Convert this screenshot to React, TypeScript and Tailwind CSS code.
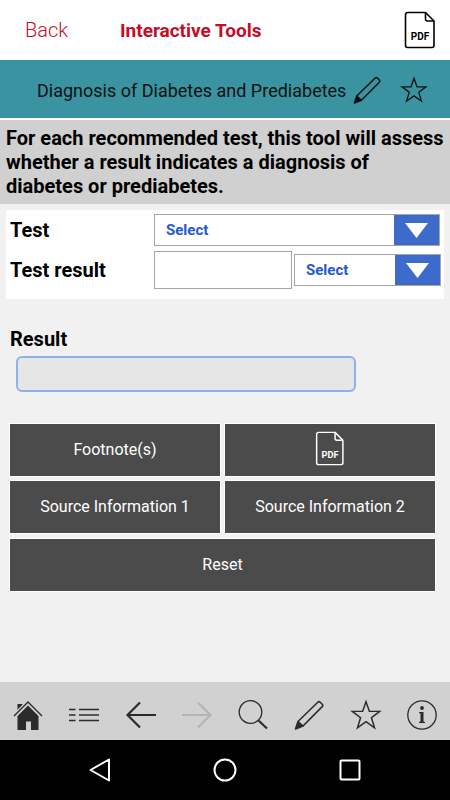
import type { ReactNode } from 'react';

function PdfIcon({ className }: { className: string }) {
  return (
    <svg className={className} viewBox="0 0 32 38" fill="none" stroke="currentColor" strokeWidth="1.6" aria-hidden="true">
      <path d="M3.500 1.500h18l8.500 8.500v24.500a2 2 0 0 1-2 2H3.500a2 2 0 0 1-2-2V3.500a2 2 0 0 1 2-2z" strokeLinejoin="round" />
      <path d="M21.500 1.500V8a2 2 0 0 0 2 2H30" />
      <text x="16" y="29" textAnchor="middle" fontFamily="'Liberation Sans Narrow', Roboto, sans-serif" fontSize="10" fontWeight="700" fill="currentColor" stroke="none">
        PDF
      </text>
    </svg>
  );
}

function PencilIcon({ className }: { className: string }) {
  return (
    <svg className={className} viewBox="0 0 30 30" fill="none" stroke="currentColor" strokeWidth="1.6" strokeLinejoin="round" aria-hidden="true">
      <path d="M4 21.500 23.800 2.200q1.200-1.200 2.400 0l2 2q1.200 1.200 0 2.400L9 26" />
      <path d="M4 21.500 1.500 29 9 26z" fill="currentColor" />
    </svg>
  );
}

function StarIcon({ className }: { className: string }) {
  return (
    <svg className={className} viewBox="0 0 30 30" fill="none" stroke="currentColor" strokeWidth="1.4" aria-hidden="true">
      <path d="M15 2.500l3.200 9.100h9.600l-7.700 5.900 2.900 9.500-8-5.700-8 5.700 2.900-9.500-7.700-5.900h9.600z" />
    </svg>
  );
}

function HomeIcon() {
  return (
    <svg className="size-[30px]" viewBox="0 0 30 30" aria-hidden="true">
      <path d="M4.500 4h5v3L4.500 12z" fill="currentColor" />
      <path d="M1 16 15 2l14 14" fill="none" stroke="#d1d1d1" strokeWidth="4" />
      <path d="M1 16 15 2l14 14" fill="none" stroke="currentColor" strokeWidth="1.400" />
      <path d="M15 5.500 25.500 16v14H18v-8.500h-5V30H4.500V16z" fill="currentColor" />
    </svg>
  );
}

function ListIcon() {
  return (
    <svg className="size-[30px]" viewBox="0 0 30 30" stroke="currentColor" strokeWidth="1.700" aria-hidden="true">
      <path d="M0 9.500h6.500M10 9.500h20M0 15h6.500M10 15h20M0 20.500h6.500M10 20.500h20" />
    </svg>
  );
}

function ArrowIcon({ flipped = false }: { flipped?: boolean }) {
  return (
    <svg className="size-[30px]" viewBox="0 0 30 30" fill="none" stroke="currentColor" strokeWidth="2.200" aria-hidden="true">
      {flipped ? <path d="M0 15h28M16 2.500 28.500 15 16 27.500" /> : <path d="M30 15H2M14 2.500 1.500 15 14 27.500" />}
    </svg>
  );
}

function SearchIcon() {
  return (
    <svg className="size-[30px]" viewBox="0 0 30 30" fill="none" stroke="currentColor" aria-hidden="true">
      <circle cx="12.500" cy="12" r="11.300" strokeWidth="1.300" />
      <path d="M20.500 20.500 29 28.500" strokeWidth="2.200" />
    </svg>
  );
}

function InfoIcon() {
  return (
    <svg className="size-[30px]" viewBox="0 0 30 30" aria-hidden="true">
      <circle cx="15" cy="15" r="14.200" fill="none" stroke="currentColor" strokeWidth="1.300" />
      <circle cx="15" cy="8" r="1.900" fill="currentColor" />
      <path d="M12 12h4.500v9.500l1.500.5v1h-6v-1l1.500-.5v-8l-1.500-.5z" fill="currentColor" />
    </svg>
  );
}

function Dropdown({ id, label }: { id: string; label: string }) {
  return (
    <div className="relative flex h-8 w-full border border-[#a6a6a6] bg-white">
      <select
        id={id}
        aria-label={label}
        className="w-full appearance-none bg-transparent pl-[11px] text-[15px] font-bold text-[#2459d0] outline-none"
      >
        <option>Select</option>
      </select>
      <span className="pointer-events-none absolute inset-y-0 right-0 flex w-[45px] items-center justify-center bg-[#3d6bcb]">
        <svg className="h-[15px] w-[23px]" viewBox="0 0 23 15" fill="white" aria-hidden="true">
          <path d="M0 0h23L11.500 15z" />
        </svg>
      </span>
    </div>
  );
}

function ActionButton({ children, label }: { children: ReactNode; label?: string }) {
  return (
    <button
      type="button"
      aria-label={label}
      className="flex h-[52px] w-full items-center justify-center bg-[#4b4b4b] text-[16px] text-white ring-1 ring-white"
    >
      {children}
    </button>
  );
}

const tabs: { label: string; icon: ReactNode; disabled?: boolean }[] = [
  { label: 'Home', icon: <HomeIcon /> },
  { label: 'Contents', icon: <ListIcon /> },
  { label: 'Previous', icon: <ArrowIcon /> },
  { label: 'Next', icon: <ArrowIcon flipped />, disabled: true },
  { label: 'Search', icon: <SearchIcon /> },
  { label: 'Notes', icon: <PencilIcon className="size-[30px]" /> },
  { label: 'Favorites', icon: <StarIcon className="size-8" /> },
  { label: 'Information', icon: <InfoIcon /> },
];

export default function App() {
  return (
    <div className="flex min-h-screen flex-col bg-[#f1f1f1] font-[Roboto,sans-serif] text-black">
      <header className="flex h-[60px] items-center bg-white pr-3.5 pl-[25px] text-[#c60c27]">
        <a href="#back" className="w-[95px] text-[20px] font-light">Back</a>
        <h1 className="flex-1 pt-0.5 text-[19px] font-bold">Interactive Tools</h1>
        <button type="button" aria-label="Open PDF" className="text-black">
          <PdfIcon className="h-[38px] w-8" />
        </button>
      </header>

      <div className="flex h-[60px] items-center border-b-2 border-white bg-[#3a93a0] pt-0.5 pr-[22px] pl-[37px] text-[#111]">
        <h2 className="flex-1 text-[18px] whitespace-nowrap">Diagnosis of Diabetes and Prediabetes</h2>
        <button type="button" aria-label="Add note" className="mr-[19px]">
          <PencilIcon className="size-7" />
        </button>
        <button type="button" aria-label="Add to favorites">
          <StarIcon className="size-7" />
        </button>
      </div>

      <main className="flex-1">
        <p className="bg-[#d0d0d0] pt-1.5 pb-1.5 pl-1.5 text-[20px] leading-6 font-bold">
          For each recommended test, this tool will assess whether a result indicates a diagnosis of diabetes or prediabetes.
        </p>

        <section className="mx-1.5 mt-1.5 bg-white pt-1 pr-[3px] pb-2.5 pl-1">
          <div className="flex items-center pr-px">
            <label htmlFor="test" className="w-36 shrink-0 text-[20px] font-bold">Test</label>
            <Dropdown id="test" label="Test" />
          </div>
          <div className="mt-[5px] flex items-center">
            <label htmlFor="test-result" className="w-36 shrink-0 text-[20px] font-bold">Test result</label>
            <input id="test-result" type="text" className="mr-0.5 h-[38px] min-w-0 flex-1 border border-[#a6a6a6] bg-white px-2 outline-none" />
            <div className="w-[147px]">
              <Dropdown id="unit" label="Unit" />
            </div>
          </div>
        </section>

        <section className="mt-[26px] px-2.5">
          <label htmlFor="result" className="block text-[20px] leading-7 font-bold">Result</label>
          <div className="pt-[3px] pl-1.5">
            <input
              id="result"
              type="text"
              readOnly
              className="block h-9 w-[340px] max-w-full rounded-md border-2 border-[#8fb0e8] bg-[#e6e6e6] px-2 outline-none"
            />
          </div>
        </section>

        <section className="mt-8 mr-[15px] ml-2.5">
          <div className="grid grid-cols-2 gap-[5px]">
            <ActionButton>Footnote(s)</ActionButton>
            <ActionButton label="PDF">
              <PdfIcon className="mb-1 h-[35px] w-[30px]" />
            </ActionButton>
            <ActionButton>Source Information 1</ActionButton>
            <ActionButton>Source Information 2</ActionButton>
          </div>
          <div className="mt-1.5">
            <ActionButton>Reset</ActionButton>
          </div>
        </section>
      </main>

      <nav aria-label="App" className="grid h-[58px] grid-cols-8 bg-[#d1d1d1] pt-2">
        {tabs.map((tab) => (
          <button
            key={tab.label}
            type="button"
            aria-label={tab.label}
            disabled={tab.disabled}
            className="flex items-center justify-center text-[#2b2b2b] disabled:text-[#b5b5b5]"
          >
            {tab.icon}
          </button>
        ))}
      </nav>

      <nav aria-label="System" className="grid h-[60px] grid-cols-3 bg-black px-[38px] text-white">
        <button type="button" aria-label="System back" className="flex items-center justify-center">
          <svg className="size-6" viewBox="0 0 24 24" fill="none" stroke="currentColor" strokeWidth="2" strokeLinejoin="round" aria-hidden="true">
            <path d="M21 1.500v21L2.500 12z" />
          </svg>
        </button>
        <button type="button" aria-label="System home" className="flex items-center justify-center">
          <svg className="size-6" viewBox="0 0 24 24" fill="none" stroke="currentColor" strokeWidth="2" aria-hidden="true">
            <circle cx="12" cy="12" r="10.500" />
          </svg>
        </button>
        <button type="button" aria-label="System overview" className="flex items-center justify-center">
          <svg className="size-6" viewBox="0 0 24 24" fill="none" stroke="currentColor" strokeWidth="2" aria-hidden="true">
            <rect x="2.500" y="2.500" width="19" height="19" rx="1" />
          </svg>
        </button>
      </nav>
    </div>
  );
}
